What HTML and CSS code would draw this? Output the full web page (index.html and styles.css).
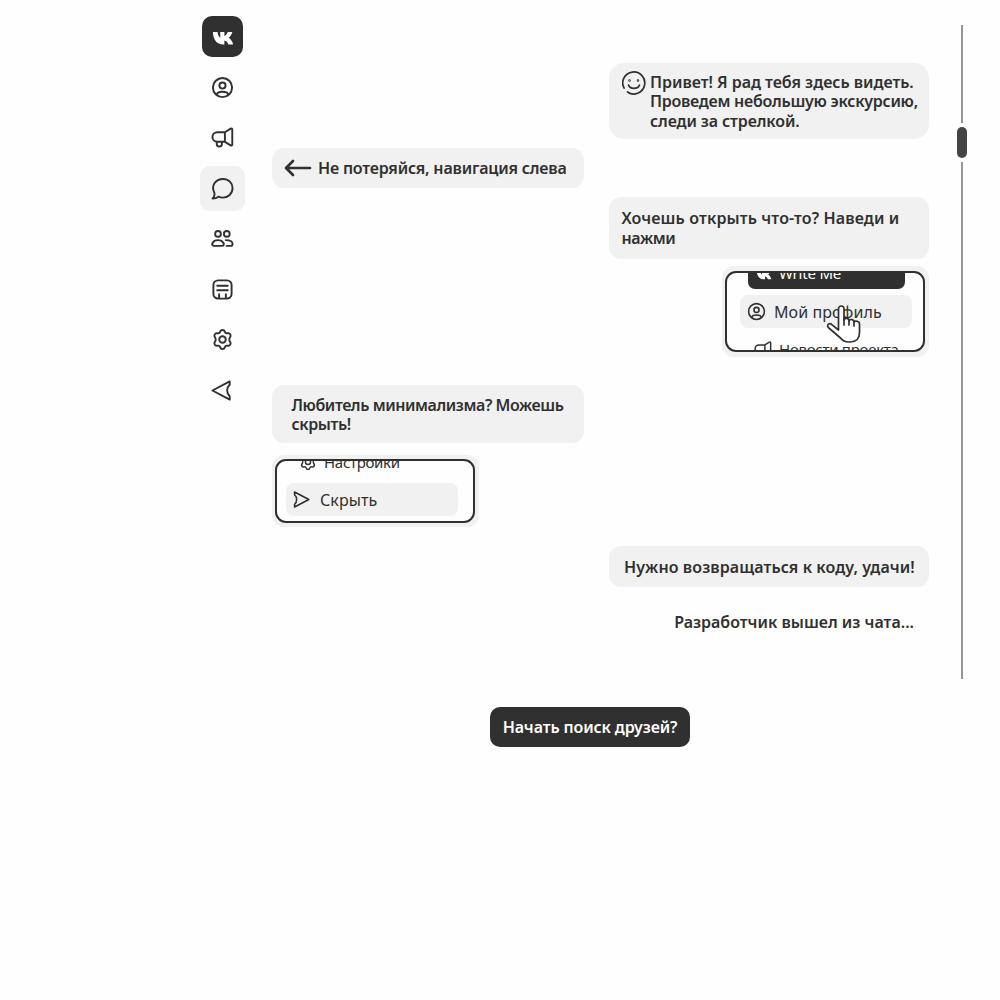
FILE: index.html
```html
<!DOCTYPE html>
<html lang="ru">
<head>
<meta charset="utf-8">
<title>Write Me</title>
<link rel="stylesheet" href="styles.css">
</head>
<body>
<svg class="sprite" aria-hidden="true">
  <symbol id="vk" viewBox="0 0 24 16"><path d="M1 1h5c.5 3.600 1.700 5.700 3 6.300V1h4.500v4.300c1.500-.4 2.800-2 3.700-4.300h5c-.7 2.700-2.300 4.900-4 6.200 1.900 1.200 3.900 3.600 4.900 7.300h-5.200c-.8-2.300-2.300-3.900-4.400-4.300v4.300h-1.400C5.600 14.500 1.300 10 1 1z" fill="currentColor"/></symbol>
  <symbol id="user" viewBox="0 0 24 24"><circle cx="12" cy="12" r="10"/><circle cx="12" cy="10" r="3.200"/><path d="M6 19.700c.2-2.300 2.400-3.200 6-3.200s5.800.9 6 3.200"/></symbol>
  <symbol id="news" viewBox="0 0 24 24"><path d="M14.500 6.500H6.500a5 5 0 0 0 0 10h8zM14.500 6.500l6-3.700c1-.5 1.700 0 1.700 1v15.400c0 1-.7 1.500-1.700 1l-6-3.700M6 16.700v2a2.700 2.700 0 0 0 5.400 0v-2"/></symbol>
  <symbol id="chat" viewBox="0 0 24 24"><path d="M3.500 16.500C-.2 9 4.500 2 12.500 2c6 0 10 4.300 10 9.500 0 6-4.700 10-10.200 10-2 0-3.500-.5-4.500-1-2 1.600-4 2-6.200 2 1.700-1.700 2.500-3.500 1.900-6z"/></symbol>
  <symbol id="people" viewBox="0 0 24 24"><circle cx="7.300" cy="7.200" r="3"/><circle cx="16.500" cy="7.200" r="3"/><path d="M3.300 19.700h8c2 0 2.400-1.500 1.700-3-1-2-3-3-5.700-3s-4.700 1-5.700 3c-.7 1.500-.3 3 1.700 3zM15.500 13.700c4 0 7 1.400 7 4 0 1.300-.8 2-2.200 2h-4"/></symbol>
  <symbol id="notes" viewBox="0 0 24 24"><rect x="2.500" y="2.500" width="19" height="19" rx="5"/><path d="M6.500 8h11M6.500 12.700h11M8.500 17v4M15.500 17v4"/></symbol>
  <symbol id="gear" viewBox="0 0 24 24"><path d="M9.600 3.800c.7-2.400 4.100-2.400 4.800 0 .4 1.300 1.600 2 2.900 1.700 2.500-.6 4.200 2.300 2.500 4.200-.9 1-.9 3.600 0 4.600 1.700 1.900 0 4.800-2.500 4.200-1.300-.3-2.500.4-2.900 1.700-.7 2.400-4.100 2.400-4.800 0-.4-1.300-1.600-2-2.900-1.700-2.500.6-4.200-2.300-2.500-4.200.9-1 .9-3.600 0-4.600C2.500 7.800 4.200 4.900 6.700 5.500c1.300.3 2.500-.4 2.900-1.700z"/><circle cx="12" cy="12" r="3.400"/></symbol>
  <symbol id="send" viewBox="0 0 24 24"><path d="M4.500 2.500l18 9.500-18 9.500V18c3.500-3 3.500-9 0-12z"/></symbol>
</svg>
<main class="page">
  <nav class="nav">
    <a class="nav-item logo"><svg><use href="#vk"/></svg></a>
    <a class="nav-item"><svg class="icon"><use href="#user"/></svg></a>
    <a class="nav-item"><svg class="icon"><use href="#news"/></svg></a>
    <a class="nav-item active"><svg class="icon"><use href="#chat"/></svg></a>
    <a class="nav-item"><svg class="icon"><use href="#people"/></svg></a>
    <a class="nav-item"><svg class="icon"><use href="#notes"/></svg></a>
    <a class="nav-item"><svg class="icon"><use href="#gear"/></svg></a>
    <a class="nav-item"><svg class="icon flip"><use href="#send"/></svg></a>
  </nav>
  <section class="content">
    <div class="chat">
      <div class="bubble right hello">
        <svg class="smile" viewBox="0 0 24 24"><path d="M2.100 17.200A11 11 0 1 1 5.500 21"/><path d="M6.500 14c1.500 4.500 9.500 4.500 11 0" /><circle cx="7.500" cy="9.500" r=".4"/><circle cx="16" cy="9.500" r=".4"/></svg>
        <p><span class="t-hello1">Привет! Я рад тебя здесь видеть.</span><span class="t-hello2">Проведем небольшую экскурсию,</span><span class="t-hello3">следи за стрелкой.</span></p>
      </div>
      <div class="bubble left lost">
        <svg class="arrow" viewBox="0 0 28 18"><path d="M2 9h24M9 2L2 9l7 7"/></svg>
        <p><span class="t-lost">Не потеряйся, навигация слева</span></p>
      </div>
      <div class="bubble right open">
        <p><span class="t-open1">Хочешь открыть что-то? Наведи и</span><span class="t-open2">нажми</span></p>
      </div>
      <div class="shot right shot-profile">
        <div class="screen">
          <div class="row brand"><svg><use href="#vk"/></svg><span class="t-brand">Write Me</span></div>
          <div class="row picked"><svg class="icon"><use href="#user"/></svg><span class="t-profile">Мой профиль</span></div>
          <div class="row below"><svg class="icon"><use href="#news"/></svg><span class="t-news">Новости проекта</span></div>
        </div>
        <svg class="hand" viewBox="0 0 36 39"><path d="M12.500 25V4c0-4 5.500-4 5.500 0v11c.5-2.500 5-2 5 .7 1-2 5-1.300 5 1.300 1-1.600 5.500-1 5.500 2v8.500c0 6-3.500 9.500-9 9.500h-2c-4 0-6-1.500-8-4L2.300 22.500c-2-3 1.300-5 3.800-2.700z"/><path d="M18 14v6M23 16v4M28 17v4"/></svg>
      </div>
      <div class="bubble left minimal">
        <p><span class="t-min1">Любитель минимализма? Можешь</span><span class="t-min2">скрыть!</span></p>
      </div>
      <div class="shot left shot-hide">
        <div class="screen">
          <div class="row above"><svg class="icon"><use href="#gear"/></svg><span class="t-settings">Настройки</span></div>
          <div class="row picked"><svg class="icon"><use href="#send"/></svg><span class="t-hide">Скрыть</span></div>
        </div>
      </div>
      <div class="bubble right bye"><p><span class="t-bye">Нужно возвращаться к коду, удачи!</span></p></div>
      <p class="status"><span class="t-status">Разработчик вышел из чата...</span></p>
    </div>
    <button class="start"><span class="t-start">Начать поиск друзей?</span></button>
  </section>
  <div class="rail"><i class="track top"></i><i class="thumb"></i><i class="track bottom"></i></div>
</main>
</body>
</html>
```
FILE: styles.css
```css
* { box-sizing: border-box; }
body { margin: 0; height: 1000px; overflow: hidden; background: #fefefe; color: #303030; font-family: "Noto Sans", sans-serif; }
p { margin: 0; }
.sprite { position: absolute; width: 0; height: 0; }
svg { flex: none; fill: none; stroke: currentColor; stroke-width: 2; stroke-linecap: round; stroke-linejoin: round; }
.page { display: flex; padding-left: 200px; }

.nav { display: flex; flex-direction: column; width: 45px; padding-top: 14px; gap: 5.500px; }
.nav-item { display: flex; align-items: center; justify-content: center; width: 45px; height: 45px; border-radius: 10px; }
.nav-item .icon { width: 23px; height: 23px; }
.nav-item.active { background: #f1f1f1; }
.logo { width: 41px; height: 41px; margin: 2px; background: #303030; border-radius: 10px; color: #fff; }
.logo svg { width: 22px; height: 15px; margin-top: 3px; stroke: none; }
.flip { transform: scaleX(-1); }

.content { display: flex; flex-direction: column; width: 657px; margin-left: 27px; padding-top: 63px; }
.chat { display: flex; flex-direction: column; height: 644px; font-size: 16px; font-weight: 600; line-height: 19.500px; }
.chat p span { display: block; white-space: nowrap; }
.bubble { display: flex; align-items: center; background: #f1f1f1; border-radius: 12px; }
.bubble p { padding-top: 1px; }
.right { align-self: flex-end; }
.left { align-self: flex-start; }
.bubble.right { width: 320px; }
.bubble.left { width: 312px; }
.hello { height: 76px; padding-left: 13px; gap: 4px; border-radius: 15px; }
.hello p { padding-top: 2px; }
.smile { width: 24px; height: 24px; align-self: flex-start; margin-top: 8px; stroke-width: 1.700; }
.lost { height: 40px; margin-top: 9px; padding-left: 12px; gap: 6px; }
.arrow { width: 28px; height: 18px; stroke-width: 2.700; }
.open { height: 62px; margin-top: 9px; padding-left: 12.500px; }
.minimal { height: 58px; margin-top: 28px; padding-left: 19.500px; }
.minimal p { padding-top: 2px; }
.bye { height: 41px; margin-top: 19px; padding-left: 15px; }
.bye p { padding-top: 2px; }
.status { align-self: flex-end; margin: 26px 15px 0 0; }

.t-hello1 { letter-spacing: -0.03px; }
.t-hello2 { letter-spacing: -0.260px; }
.t-hello3 { letter-spacing: -0.120px; }
.t-lost { letter-spacing: -0.190px; }
.t-open1 { letter-spacing: 0.130px; }
.t-open2 { letter-spacing: -0.400px; }
.t-min1 { letter-spacing: -0.430px; }
.t-min2 { letter-spacing: -0.400px; }
.t-bye { letter-spacing: 0.090px; }
.t-start { letter-spacing: -0.120px; }
.t-brand { letter-spacing: -0.200px; }
.t-news { letter-spacing: -0.270px; }
.t-settings { letter-spacing: -0.300px; }
.t-profile, .t-hide { letter-spacing: 0.080px; }

.shot { position: relative; width: 207px; padding: 4px 4px 4px 3px; background: #f1f1f1; border-radius: 12px; font-weight: 400; }
.screen { display: flex; flex-direction: column; width: 200px; overflow: hidden; border: 2px solid #303030; border-radius: 11px; background: #fefefe; }
.row { display: flex; align-items: center; flex: none; white-space: nowrap; }
.row .icon { width: 18px; height: 18px; stroke-width: 2; }
.row span { padding-top: 1px; }
.row.picked span { padding-top: 2px; }
.shot-profile { height: 91px; margin-top: 7px; padding-top: 5px; }
.shot-profile .screen { height: 81px; }
.brand { width: 157px; height: 32px; margin: -16px 0 0 21px; padding-left: 8px; gap: 7px; border-radius: 7px; background: #303030; color: #fff; font-size: 15px; }
.brand svg { width: 16px; height: 12px; margin-top: 3px; stroke: none; }
.picked { width: 172px; height: 33px; border-radius: 8px; background: #f1f1f1; }
.shot-profile .picked { margin: 6px 0 0 13px; padding-left: 7px; gap: 8px; }
.shot-profile .picked .icon { width: 19px; height: 19px; }
.below { height: 32px; margin: 5px 0 0 27px; gap: 7px; font-size: 15px; }
.hand { position: absolute; left: 104px; top: 39px; width: 36px; height: 39px; fill: #fff; stroke: #303030; stroke-width: 1.700; }
.shot-hide { height: 72px; margin-top: 12px; }
.shot-hide .screen { height: 64px; }
.above { height: 26px; margin: -12px 0 0 22px; gap: 7px; font-size: 15px; }
.shot-hide .picked { margin: 8px 0 0 9px; padding-left: 5px; gap: 10px; }
.shot-hide .picked .icon { width: 19px; height: 19px; }

.start { align-self: center; width: 200px; height: 40px; margin-right: 21px; padding: 0; border: 0; border-radius: 10px; background: #303030; color: #fff; font: 600 16px "Noto Sans", sans-serif; white-space: nowrap; }

.rail { display: flex; flex-direction: column; align-items: center; width: 10px; margin-left: 28px; padding-top: 25px; gap: 4px; }
.track { width: 2px; background: #969696; }
.track.top { height: 98px; }
.track.bottom { height: 517px; }
.thumb { width: 10px; height: 31px; border-radius: 5px; background: #444; }
```
